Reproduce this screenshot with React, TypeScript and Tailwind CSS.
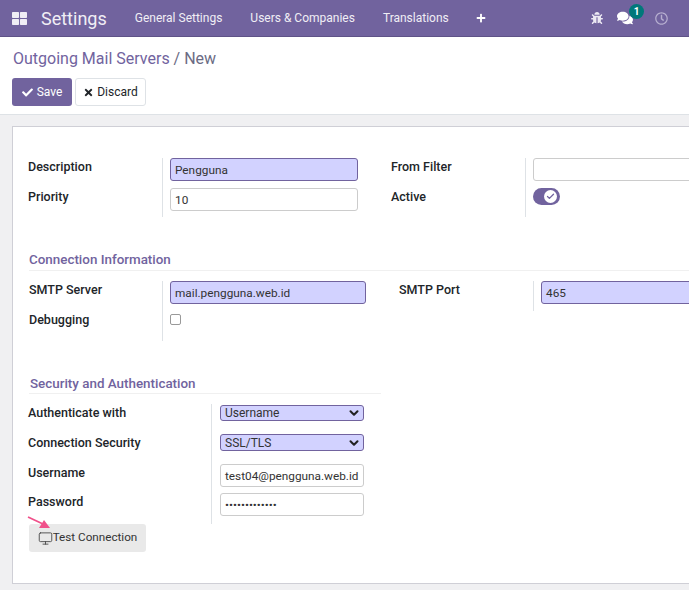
import { FaThLarge, FaCheck, FaTimes, FaPlus, FaBug, FaComments, FaRegClock } from 'react-icons/fa';
import { Monitor, ChevronDown, Check } from 'lucide-react';

const labelCls = 'text-[12.5px] font-medium leading-[19px] text-[#212529] whitespace-nowrap';
const inputBase = 'h-[23px] rounded-[3px] border px-1 pt-[1px] text-[11.8px] leading-[21px] text-[#333] flex items-center whitespace-nowrap';
const required = 'border-[#71639e] bg-[#d2d2ff]';
const plain = 'border-[#ccc] bg-white';

function NavBar() {
  return (
    <header className="flex h-[37px] items-center border-b border-[#5f5387] bg-[#71639e] text-white">
      <FaThLarge className="ml-[12px] h-[15px] w-[15px] text-[#f0eef5]" />
      <span className="ml-[14px] text-[18px] text-[#f0eef5]">Settings</span>
      <nav className="ml-[28px] flex gap-[28px] text-[12px] text-[#f0eef5]">
        <span>General Settings</span>
        <span>Users &amp; Companies</span>
        <span>Translations</span>
      </nav>
      <FaPlus className="ml-[27px] h-[10px] w-[10px]" />
      <div className="ml-auto mr-[21px] flex items-center">
        <FaBug className="h-[12px] w-[12px] text-[#ece9f3]" />
        <div className="relative ml-[14px]">
          <FaComments className="h-[16px] w-[16px]" />
          <span className="absolute -right-[11px] -top-[6px] flex h-[15px] w-[15px] items-center justify-center rounded-full bg-[#00787a] text-[10px] font-bold">1</span>
        </div>
        <FaRegClock className="ml-[22px] h-[13px] w-[13px] text-[#b7afd0]" />
      </div>
    </header>
  );
}

function ControlPanel() {
  return (
    <div className="h-[78px] border-b border-[#dee2e6] bg-white pl-[12px]">
      <div className="pl-[1px] pt-[12px] text-[16px] leading-[20px] text-[#71639e]">
        Outgoing Mail Servers <span className="text-[#6b6b84]">/ New</span>
      </div>
      <div className="mt-[9px] flex gap-[3px]">
        <button className="flex h-[28px] w-[60px] items-center justify-center gap-[4px] rounded-[3px] bg-[#71639e] text-[12px] text-white">
          <FaCheck className="h-[11px] w-[11px]" />
          Save
        </button>
        <button className="flex h-[28px] w-[71px] items-center justify-center gap-[3px] rounded-[3px] border border-[#dee2e6] bg-white text-[12px] text-[#212529]">
          <FaTimes className="h-[11px] w-[11px]" />
          Discard
        </button>
      </div>
    </div>
  );
}

function SelectBox({ value, className }: { value: string; className: string }) {
  return (
    <div className={`flex w-[144px] items-center justify-between rounded-[3px] border pl-1 pr-[2px] text-[12px] text-[#333] ${required} ${className}`}>
      {value}
      <ChevronDown className="h-[14px] w-[14px] text-[#222]" strokeWidth={3.5} />
    </div>
  );
}

export default function App() {
  return (
    <div className="h-[590px] w-[689px] overflow-hidden bg-[#f0f0f2] font-['Roboto',sans-serif]">
      <NavBar />
      <ControlPanel />
      <main className="ml-[12px] mt-[11px] h-[458px] w-[760px] border border-[#cfcfd6] bg-white pl-[15px] pt-[31px]">
        {/* first group */}
        <div className="flex h-[59px]">
          <div className="w-[134px]">
            <div className={`-mt-[1px] ${labelCls}`}>Description</div>
            <div className={`mt-[11px] ${labelCls}`}>Priority</div>
          </div>
          <div className="w-[229px] border-l border-[#dee2e6] pl-[7px]">
            <div className={`${inputBase} ${required} w-[188px]`}>Pengguna</div>
            <div className={`${inputBase} ${plain} mt-[7px] w-[188px]`}>10</div>
          </div>
          <div className="w-[134px]">
            <div className={`-mt-[1px] ${labelCls}`}>From Filter</div>
            <div className={`mt-[11px] ${labelCls}`}>Active</div>
          </div>
          <div className="border-l border-[#dee2e6] pl-[7px]">
            <div className={`${inputBase} ${plain} w-[200px]`} />
            <div className="mt-[7px] flex h-[17px] w-[27px] items-center justify-end rounded-full bg-[#71639e] pr-[3px]">
              <span className="flex h-[13px] w-[13px] items-center justify-center rounded-full bg-white">
                <Check className="h-[9px] w-[9px] text-[#71639e]" strokeWidth={3.5} />
              </span>
            </div>
          </div>
        </div>

        {/* connection */}
        <div className="mt-[33px] ml-[1px] border-b border-[#f0f0f0] pb-[1px] text-[13.4px] font-medium leading-[19px] text-[#71639e]">
          Connection Information
        </div>
        <div className="mt-[10px] flex h-[60px]">
          <div className="w-[134px] pl-[1px]">
            <div className={`-mt-[1px] ${labelCls}`}>SMTP Server</div>
            <div className={`mt-[11px] ${labelCls}`}>Debugging</div>
          </div>
          <div className="w-[237px] border-l border-[#dee2e6] pl-[7px]">
            <div className={`${inputBase} ${required} w-[196px]`}>mail.pengguna.web.id</div>
            <div className="mt-[10px] h-[11px] w-[11px] rounded-[2px] border border-[#999] bg-white" />
          </div>
          <div className="w-[134px]">
            <div className={`-mt-[1px] ${labelCls}`}>SMTP Port</div>
          </div>
          <div className="h-[30px] border-l border-[#dee2e6] pl-[7px]">
            <div className={`${inputBase} ${required} w-[200px]`}>465</div>
          </div>
        </div>

        {/* security */}
        <div className="mt-[33px] ml-[1px] w-[352px] border-b border-[#f0f0f0] pl-[1px] text-[13.4px] font-medium leading-[19px] text-[#71639e]">
          Security and Authentication
        </div>
        <div className="mt-[10px] flex h-[120px]">
          <div className="w-[183px]">
            <div className={`-mt-[1px] ${labelCls}`}>Authenticate with</div>
            <div className={`mt-[11px] ${labelCls}`}>Connection Security</div>
            <div className={`mt-[11px] ${labelCls}`}>Username</div>
            <div className={`mt-[10px] ${labelCls}`}>Password</div>
          </div>
          <div className="border-l border-[#dee2e6] pl-[8px] pt-[1px]">
            <SelectBox value="Username" className="h-[16px]" />
            <SelectBox value="SSL/TLS" className="mt-[13px] h-[17px]" />
            <div className={`${inputBase} ${plain} mt-[13px] w-[144px]`}>test04@pengguna.web.id</div>
            <div className={`${inputBase} ${plain} mt-[6px] w-[144px] text-[#111]`}>•••••••••••••</div>
          </div>
        </div>
        <div className="relative ml-[1px] flex h-[28px] w-[117px] items-center justify-center rounded-[3px] bg-[#e9e9e9] text-[11.7px] text-[#333]">
          <Monitor className="h-[15px] w-[15px] text-[#444]" strokeWidth={1.4} />
          Test Connection
          <svg className="absolute -left-[2px] -top-[8px] h-[14px] w-[24px]" viewBox="0 0 24 14" fill="none">
            <path d="M1 1 L16 8" stroke="#f0508a" strokeWidth="1.8" />
            <path d="M23 12 L12 12 L17 4 Z" fill="#f0508a" />
          </svg>
        </div>
      </main>
    </div>
  );
}
